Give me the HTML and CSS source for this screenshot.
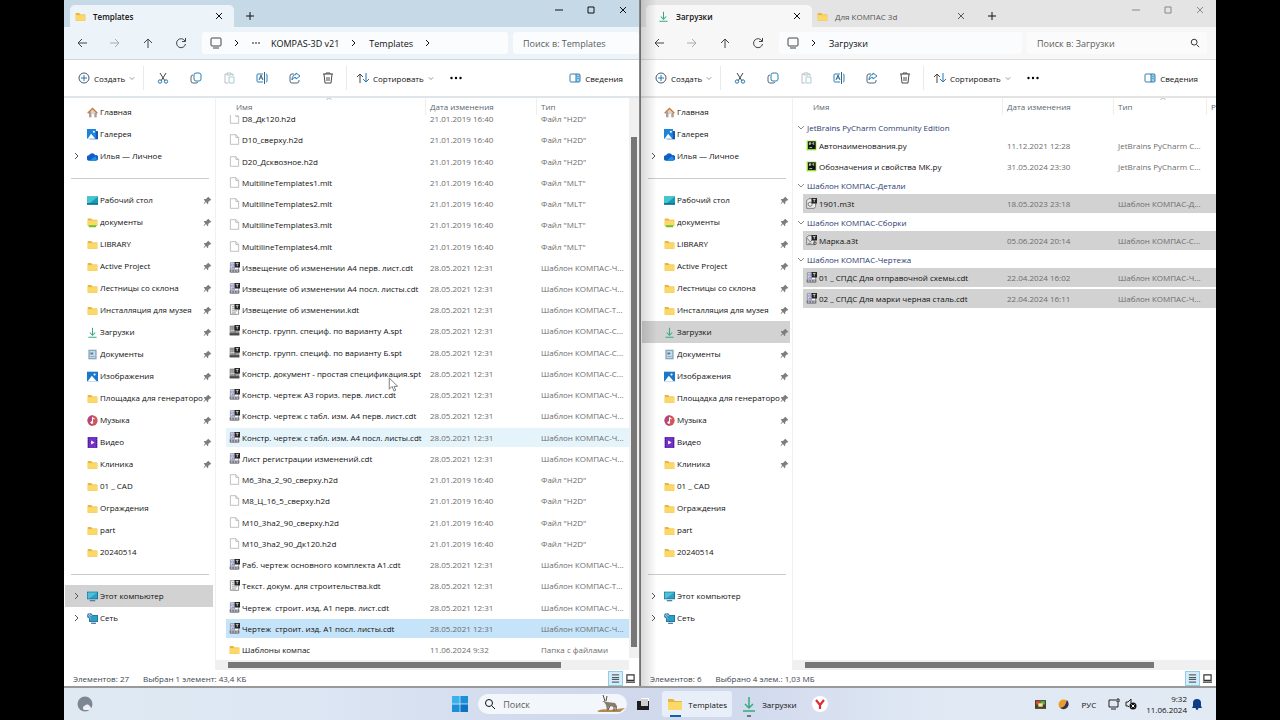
FILE: index.html
```
<!DOCTYPE html>
<html lang="ru">
<head>
    <meta charset="utf-8">
    <title>Проводник</title>
    <link rel="stylesheet" href="styles.css">
</head>
<body>
    <!-- Набор иконок -->
    <svg class="sprite" aria-hidden="true">
        <symbol id="folder" viewBox="0 0 16 16"><path d="M1 3h5l2 2h7v9H1z" fill="#e9b53c"/><path d="M1 6h14v8H1z" fill="#fcd867"/></symbol>
        <symbol id="folder-green" viewBox="0 0 16 16"><path d="M1 2h5l2 2h7v9H1z" fill="#e9b53c"/><path d="M1 5h14v8H1z" fill="#fcd867"/><path d="M2 12h12l-1 3H3z" fill="#6cc02c"/></symbol>
        <symbol id="home" viewBox="0 0 16 16"><path d="M3 7v8h4v-5h3v5h4V7L8 3z" fill="#d9d3cf"/><path d="M3 8v7h3V6zM11 9v6h3V8z" fill="#a99d98"/><path d="M1 9l7-7 7 7" fill="none" stroke="#cf7335" stroke-width="2"/></symbol>
        <symbol id="gallery" viewBox="0 0 16 16"><path d="M4 3h12v12H4z" fill="#1557a8"/><path d="M0 0h13v14H0z" fill="#1d83dc"/><path d="M1 14l5-7 6 7z" fill="#fff"/><circle cx="10" cy="4" r="1.5" fill="#fff"/></symbol>
        <symbol id="cloud" viewBox="0 0 16 16"><path d="M4 14a4 4 0 0 1-1-8 5 5 0 0 1 9 0 4 4 0 0 1 1 8z" fill="#0f5fc4"/><path d="M4 14l7-6a3.500 3.500 0 0 1 2 6z" fill="#2390e6"/></symbol>
        <symbol id="desktop" viewBox="0 0 16 16"><path d="M0 2h16v12H0z" fill="#159cb3"/><path d="M0 2h16L4 12H0z" fill="#43c6d0"/><path d="M0 12h16v2H0z" fill="#0b6793"/></symbol>
        <symbol id="download" viewBox="0 0 16 16"><path d="M8 1v10M4 8l4 4 4-4M2 15h12" fill="none" stroke="#35ac80" stroke-width="1.500"/></symbol>
        <symbol id="docs" viewBox="0 0 16 16"><path d="M2 1h12v14H2z" fill="#8ba5bd"/><path d="M4 3h8v10H4z" fill="#c8dceb"/><path d="M5 5h4v3H5zM5 10h6v1H5z" fill="#567c9b"/></symbol>
        <symbol id="image" viewBox="0 0 16 16"><path d="M0 1h16v14H0z" fill="#1b78c9"/><path d="M1 15l6-8 7 8z" fill="#fff"/><circle cx="11" cy="5" r="1.500" fill="#fff"/></symbol>
        <symbol id="music" viewBox="0 0 16 16"><circle cx="8" cy="8" r="7.500" fill="#d05658"/><path d="M3 13A7.500 7.500 0 0 1 8 .5v15a7 7 0 0 1-5-2.500z" fill="#b4487c"/><circle cx="7" cy="11" r="2" fill="#fff"/><path d="M8 11V4l3 2" fill="none" stroke="#fff" stroke-width="1.500"/></symbol>
        <symbol id="video" viewBox="0 0 16 16"><path d="M1 0h14v16H1z" fill="#7131c4"/><path d="M2 1v14M14 1v14" stroke="#401786" stroke-width="1.500" stroke-dasharray="2 1"/><path d="M6 5l5 3-5 3z" fill="#fff"/></symbol>
        <symbol id="pc" viewBox="0 0 16 16"><path d="M0 1h16v11H0z" fill="#176796"/><path d="M1 2h14v9H1z" fill="#2b9fc4"/><path d="M1 2h14L3 11H1z" fill="#4fc0d6"/><path d="M4 13h8v2H4z" fill="#5580a2"/></symbol>
        <symbol id="network" viewBox="0 0 16 16"><path d="M3 3h13v10H3z" fill="#176796"/><path d="M4 4h11v8H4z" fill="#2b9fc4"/><path d="M6 14h7v2H6z" fill="#5580a2"/><circle cx="4" cy="4" r="4" fill="#3d86b3"/><path d="M1 3l3 2 1 3M3 0l1 3 3 1" fill="none" stroke="#c6e8ee"/></symbol>
        <symbol id="pin" viewBox="0 0 12 12"><path d="M7 1l4 4-1 1-1 0-2 2 0 2-1 1-2-3-3 3 0-1 2-3-2-2 1-1 2 0 2-2z" fill="#7d7d7d"/></symbol>
        <symbol id="blank" viewBox="0 0 16 16"><path d="M2 1h8l4 4v10H2z" fill="#fff" stroke="#a5a5a5"/><path d="M10 1v4h4" fill="none" stroke="#a5a5a5"/></symbol>
        <symbol id="cdt" viewBox="0 0 16 16"><path d="M2 1h12v14H2z" fill="#f2f3fb" stroke="#73737e"/><path d="M4 3h3v3H4zM4 8h4v2H4z" fill="none" stroke="#6a71c1"/><path d="M1 11h14v4H1z" fill="#74747a"/><path d="M3 13h2M7 13h2M11 13h2" stroke="#eee" stroke-width="1.500"/><path d="M8 0h8v8H8z" fill="#222"/><path d="M10 2h4M12 2v4" stroke="#fff"/></symbol>
        <symbol id="kdt" viewBox="0 0 16 16"><path d="M2 1h12v14H2z" fill="#fff" stroke="#666"/><path d="M4 4h4M4 7h4M4 10h8M4 13h6" stroke="#666"/><path d="M8 0h8v8H8z" fill="#222"/><path d="M10 2h4M12 2v4" stroke="#fff"/></symbol>
        <symbol id="spt" viewBox="0 0 16 16"><path d="M1 1h14v14H1z" fill="#7c7c7c"/><path d="M3 2v9M6 2v9M2 8h7M10 10h4" stroke="#ddd"/><path d="M1 12h14v3H1z" fill="#4b4b4b"/><path d="M8 0h8v8H8z" fill="#222"/><path d="M10 2h4M12 2v4" stroke="#fff"/></symbol>
        <symbol id="m3t" viewBox="0 0 16 16"><path d="M1 4l3-3h10v11l-2 3H1z" fill="#eee" stroke="#555"/><circle cx="6" cy="9" r="3" fill="none" stroke="#444"/><path d="M8 0h8v8H8z" fill="#222"/><path d="M10 2h4M12 2v4" stroke="#fff"/></symbol>
        <symbol id="a3t" viewBox="0 0 16 16"><path d="M1 3l3-2h8v13H1z" fill="#e7e7e7" stroke="#555"/><path d="M2 5l4 5 3-3M3 12h5" fill="none" stroke="#444"/><circle cx="13" cy="12" r="2" fill="none" stroke="#333"/><path d="M8 0h8v8H8z" fill="#222"/><path d="M10 2h4M12 2v4" stroke="#fff"/></symbol>
        <symbol id="py" viewBox="0 0 16 16"><path d="M1 1h14v14H1z" fill="#8ddd2b"/><path d="M3 2h11v11H3z" fill="#111"/><path d="M5 7V4h2v2H5M12 4h-2v2h2M5 11h4" stroke="#fff" fill="none"/></symbol>
        <symbol id="chev-r" viewBox="0 0 8 8"><path d="M2 1l3 3-3 3" fill="none" stroke="currentColor"/></symbol>
        <symbol id="chev-d" viewBox="0 0 8 8"><path d="M1 3l3 3 3-3" fill="none" stroke="currentColor"/></symbol>
        <symbol id="chev-u" viewBox="0 0 8 8"><path d="M1 5l3-3 3 3" fill="none" stroke="currentColor"/></symbol>
        <symbol id="close" viewBox="0 0 8 8"><path d="M1 1l6 6M7 1L1 7" fill="none" stroke="currentColor"/></symbol>
        <symbol id="plus" viewBox="0 0 8 8"><path d="M4 0v8M0 4h8" fill="none" stroke="currentColor"/></symbol>
        <symbol id="minimize" viewBox="0 0 8 8"><path d="M0 4h8" stroke="currentColor"/></symbol>
        <symbol id="maximize" viewBox="0 0 8 8"><path d="M1 1h6v6H1z" fill="none" stroke="currentColor"/></symbol>
        <symbol id="left" viewBox="0 0 12 12"><path d="M11 6H2M6 2L2 6l4 4" fill="none" stroke="currentColor"/></symbol>
        <symbol id="right" viewBox="0 0 12 12"><path d="M1 6h9M6 2l4 4-4 4" fill="none" stroke="currentColor"/></symbol>
        <symbol id="up" viewBox="0 0 12 12"><path d="M6 11V2M2 6l4-4 4 4" fill="none" stroke="currentColor"/></symbol>
        <symbol id="refresh" viewBox="0 0 12 12"><path d="M10 4a4.500 4.500 0 1 0 .5 3M10.500 1v3.500H7" fill="none" stroke="currentColor"/></symbol>
        <symbol id="monitor" viewBox="0 0 12 12"><path d="M2 1h8a1 1 0 0 1 1 1v6a1 1 0 0 1-1 1H2a1 1 0 0 1-1-1V2a1 1 0 0 1 1-1zM3 11h6" fill="none" stroke="currentColor"/></symbol>
        <symbol id="create" viewBox="0 0 12 12"><circle cx="6" cy="6" r="5" fill="none" stroke="#46586a"/><path d="M6 3v6M3 6h6" stroke="#2078b5"/></symbol>
        <symbol id="cut" viewBox="0 0 12 12"><path d="M3 1l5 8M9 1L4 9" stroke="#444" fill="none"/><circle cx="3" cy="9.500" r="1.700" fill="none" stroke="#2078b5"/><circle cx="9" cy="9.500" r="1.700" fill="none" stroke="#2078b5"/></symbol>
        <symbol id="copy" viewBox="0 0 12 12"><rect x="4" y="1" width="7" height="8" rx="2" fill="none" stroke="#2c7fb8"/><path d="M3 3a2 2 0 0 0-2 2v4a2 2 0 0 0 2 2h3a2 2 0 0 0 2-1" fill="none" stroke="#536778"/></symbol>
        <symbol id="paste" viewBox="0 0 12 12"><path d="M4 2H2v9h3M8 2h2v2M4 1h4v2H4z" fill="none" stroke="#b8c0c4"/><path d="M6 5h5v6H6z" fill="none" stroke="#a8cdd6"/></symbol>
        <symbol id="rename" viewBox="0 0 12 12"><path d="M7 2H2a1 1 0 0 0-1 1v6a1 1 0 0 0 1 1h5M10 2a1 1 0 0 1 1 1v6a1 1 0 0 1-1 1" fill="none" stroke="#2c7fb8"/><path d="M8.500 0v12M3 8l2-5 2 5M4 6h2" fill="none" stroke="#37658a"/></symbol>
        <symbol id="share" viewBox="0 0 12 12"><path d="M5 2H3a2 2 0 0 0-2 2v5a2 2 0 0 0 2 2h5a2 2 0 0 0 2-2V8" fill="none" stroke="#536778"/><path d="M7 1l4 3-4 3V5.500Q4 5 3 8q0-5 4-5.500z" fill="none" stroke="#2c7fb8"/></symbol>
        <symbol id="trash" viewBox="0 0 12 12"><path d="M1 2h10M4 2V1h4v1M2 2l1 9h6l1-9M5 5v4M7 5v4" fill="none" stroke="#4a4a4a"/></symbol>
        <symbol id="sort" viewBox="0 0 12 12"><path d="M3 11V2M0 5l3-3 3 3" fill="none" stroke="#444"/><path d="M9 1v9M6 7l3 3 3-3" fill="none" stroke="#2078b5"/></symbol>
        <symbol id="dots" viewBox="0 0 12 12"><circle cx="1.500" cy="6" r="1.200"/><circle cx="6" cy="6" r="1.200"/><circle cx="10.500" cy="6" r="1.200"/></symbol>
        <symbol id="details" viewBox="0 0 12 12"><path d="M7 2h4v8H7z" fill="#9bd3f2"/><rect x="1" y="2" width="10" height="8" rx="1" fill="none" stroke="#3c7daa"/><path d="M7 2v8M9 4v1M9 6v1" stroke="#2078b5"/></symbol>
        <symbol id="search" viewBox="0 0 12 12"><circle cx="5" cy="5" r="3.500" fill="none" stroke="currentColor"/><path d="M8 8l3 3" stroke="currentColor"/></symbol>
        <symbol id="rows" viewBox="0 0 10 10"><path d="M1 1h8M1 4h8M1 6h8M1 9h8" stroke="#333"/></symbol>
        <symbol id="thumb" viewBox="0 0 10 10"><path d="M1 1h8v6H1zM0 9h10" fill="none" stroke="#333" stroke-width="1.300"/></symbol>
        <symbol id="weather" viewBox="0 0 16 16"><circle cx="8" cy="8" r="7.500" fill="#7c8794"/><path d="M7 14a2.500 2.500 0 0 1 1-4.500 3 3 0 0 1 5 1 2 2 0 0 1 0 3.500z" fill="#edf1f5"/></symbol>
        <symbol id="start" viewBox="0 0 16 16"><path d="M0 0h7.600v7.600H0z" fill="#38b2ea"/><path d="M8.400 0H16v7.600H8.400zM0 8.400h7.600V16H0z" fill="#1b90d8"/><path d="M8.400 8.400H16V16H8.400z" fill="#0974c4"/></symbol>
        <symbol id="taskview" viewBox="0 0 12 12"><path d="M4 0h8v8H4z" fill="#fff"/><path d="M0 3h12v9H0z" fill="#1e1e1e"/><path d="M4 1h7v7H4z" fill="#cfcfcf"/></symbol>
        <symbol id="yandex" viewBox="0 0 16 16"><circle cx="8" cy="8" r="8" fill="#fff"/><path d="M4 4l4 5v4M12 4L8 9" fill="none" stroke="#dd2f35" stroke-width="2.200"/></symbol>
        <symbol id="antelope" viewBox="0 0 28 18"><path d="M0 16q6-3 12-1l16-2-5 4H2z" fill="#b5884f"/><path d="M7 6l3 1 8 1 2 3v5h-1l-1-4-6-1-1 5h-1l-1-6-2-3-2-1z" fill="#8a7c6b"/><path d="M8 6L6 0M9 6l1-5M11 15l2-4M17 16v-5" fill="none" stroke="#534a42"/></symbol>
        <symbol id="tray-app" viewBox="0 0 10 10"><path d="M0 1h10v8H0z" fill="#4a432c"/><path d="M1 2h4v3H1z" fill="#d84b34"/><path d="M5 2h4v3H5z" fill="#58b34c"/><path d="M3 4h4v3H3z" fill="#f3e7a4"/></symbol>
        <symbol id="ball" viewBox="0 0 10 10"><circle cx="5" cy="5" r="4.500" fill="#eb9c2a"/><path d="M8 1a4.500 4.500 0 0 1-6 7q5 0 6-7z" fill="#27335e"/></symbol>
        <symbol id="net" viewBox="0 0 12 12"><path d="M8 2H1v7h9V5M3 11h5M9 1h2v3H9z" fill="none" stroke="#222"/></symbol>
        <symbol id="mute" viewBox="0 0 12 12"><path d="M1 4h2l3-3v4M1 4v4h2l1 1" fill="none" stroke="#222"/><circle cx="8" cy="8" r="3.500" fill="#111"/><path d="M6.500 6.500l3 3M9.500 6.500l-3 3" stroke="#fff"/></symbol>
        <symbol id="bell" viewBox="0 0 12 12"><path d="M6 1a4 4 0 0 1 4 4v3l1 2H1l1-2V5a4 4 0 0 1 4-4zM4.500 10h3l-1 2h-1z" fill="#0c3d86"/></symbol>
    </svg>

    <div class="screen">
        <div class="windows">
            <!-- Окно Templates -->
            <section class="window window-active">
                <header class="titlebar">
                    <div class="tab tab-current"><svg class="icon"><use href="#folder"/></svg><span>Templates</span><button aria-label="Закрыть вкладку"><svg class="small"><use href="#close"/></svg></button></div>
                    <button class="new-tab" aria-label="Новая вкладка"><svg class="small"><use href="#plus"/></svg></button>
                    <div class="controls">
                        <button aria-label="Свернуть"><svg class="small"><use href="#minimize"/></svg></button>
                        <button aria-label="Развернуть"><svg class="small"><use href="#maximize"/></svg></button>
                        <button aria-label="Закрыть"><svg class="small"><use href="#close"/></svg></button>
                    </div>
                </header>
                <div class="navbar">
                    <div class="nav-buttons">
                        <button aria-label="Назад"><svg class="tool"><use href="#left"/></svg></button>
                        <button aria-label="Вперед" disabled><svg class="tool"><use href="#right"/></svg></button>
                        <button aria-label="Вверх"><svg class="tool"><use href="#up"/></svg></button>
                        <button aria-label="Обновить"><svg class="tool"><use href="#refresh"/></svg></button>
                    </div>
                    <nav class="address">
                        <svg class="tool"><use href="#monitor"/></svg>
                        <svg class="small"><use href="#chev-r"/></svg>
                        <svg class="small"><use href="#dots"/></svg>
                        <a href="#">KOMPAS-3D v21</a>
                        <svg class="small"><use href="#chev-r"/></svg>
                        <a href="#">Templates</a>
                        <svg class="small"><use href="#chev-r"/></svg>
                    </nav>
                    <label class="search search-narrow"><input type="text" placeholder="Поиск в: Templates" aria-label="Поиск"></label>
                </div>
                <div class="toolbar">
                    <button class="create"><svg class="tool"><use href="#create"/></svg>Создать<svg class="tiny"><use href="#chev-d"/></svg></button>
                    <div class="actions">
                        <button aria-label="Вырезать"><svg class="tool"><use href="#cut"/></svg></button>
                        <button aria-label="Копировать"><svg class="tool"><use href="#copy"/></svg></button>
                        <button aria-label="Вставить"><svg class="tool"><use href="#paste"/></svg></button>
                        <button aria-label="Переименовать"><svg class="tool"><use href="#rename"/></svg></button>
                        <button aria-label="Поделиться"><svg class="tool"><use href="#share"/></svg></button>
                        <button aria-label="Удалить"><svg class="tool"><use href="#trash"/></svg></button>
                    </div>
                    <button class="sort"><svg class="tool"><use href="#sort"/></svg>Сортировать<svg class="tiny"><use href="#chev-d"/></svg></button>
                    <button class="more" aria-label="Еще"><svg class="tool"><use href="#dots"/></svg></button>
                    <button class="info"><svg class="tool"><use href="#details"/></svg>Сведения</button>
                </div>
                <div class="content">
                    <nav class="sidebar">
                        <a href="#"><svg class="icon"><use href="#home"/></svg><span>Главная</span></a>
                        <a href="#"><svg class="icon"><use href="#gallery"/></svg><span>Галерея</span></a>
                        <a href="#"><svg class="expand"><use href="#chev-r"/></svg><svg class="icon"><use href="#cloud"/></svg><span>Илья — Личное</span></a>
                        <hr>
                        <a href="#"><svg class="icon"><use href="#desktop"/></svg><span>Рабочий стол</span><svg class="pin"><use href="#pin"/></svg></a>
                        <a href="#"><svg class="icon"><use href="#folder-green"/></svg><span>документы</span><svg class="pin"><use href="#pin"/></svg></a>
                        <a href="#"><svg class="icon"><use href="#folder"/></svg><span>LIBRARY</span><svg class="pin"><use href="#pin"/></svg></a>
                        <a href="#"><svg class="icon"><use href="#folder"/></svg><span>Active Project</span><svg class="pin"><use href="#pin"/></svg></a>
                        <a href="#"><svg class="icon"><use href="#folder"/></svg><span>Лестницы со склона</span><svg class="pin"><use href="#pin"/></svg></a>
                        <a href="#"><svg class="icon"><use href="#folder"/></svg><span>Инсталляция для музея</span><svg class="pin"><use href="#pin"/></svg></a>
                        <a href="#"><svg class="icon"><use href="#download"/></svg><span>Загрузки</span><svg class="pin"><use href="#pin"/></svg></a>
                        <a href="#"><svg class="icon"><use href="#docs"/></svg><span>Документы</span><svg class="pin"><use href="#pin"/></svg></a>
                        <a href="#"><svg class="icon"><use href="#image"/></svg><span>Изображения</span><svg class="pin"><use href="#pin"/></svg></a>
                        <a href="#"><svg class="icon"><use href="#folder"/></svg><span>Площадка для генераторов</span><svg class="pin"><use href="#pin"/></svg></a>
                        <a href="#"><svg class="icon"><use href="#music"/></svg><span>Музыка</span><svg class="pin"><use href="#pin"/></svg></a>
                        <a href="#"><svg class="icon"><use href="#video"/></svg><span>Видео</span><svg class="pin"><use href="#pin"/></svg></a>
                        <a href="#"><svg class="icon"><use href="#folder"/></svg><span>Клиника</span><svg class="pin"><use href="#pin"/></svg></a>
                        <a href="#"><svg class="icon"><use href="#folder"/></svg><span>01 _ CAD</span></a>
                        <a href="#"><svg class="icon"><use href="#folder"/></svg><span>Ограждения</span></a>
                        <a href="#"><svg class="icon"><use href="#folder"/></svg><span>part</span></a>
                        <a href="#"><svg class="icon"><use href="#folder"/></svg><span>20240514</span></a>
                        <hr>
                        <a href="#" class="selected"><svg class="expand"><use href="#chev-r"/></svg><svg class="icon"><use href="#pc"/></svg><span>Этот компьютер</span></a>
                        <a href="#"><svg class="expand"><use href="#chev-r"/></svg><svg class="icon"><use href="#network"/></svg><span>Сеть</span></a>
                    </nav>
                    <div class="pane">
                        <table class="files files-fill">
                            <thead><tr><th>Имя<svg class="arrow"><use href="#chev-u"/></svg></th><th>Дата изменения</th><th>Тип</th></tr></thead>
                            <tbody>
                                <tr><td><svg class="icon"><use href="#blank"/></svg>D8_Дк120.h2d</td><td>21.01.2019 16:40</td><td>Файл "H2D"</td></tr>
                                <tr><td><svg class="icon"><use href="#blank"/></svg>D10_сверху.h2d</td><td>21.01.2019 16:40</td><td>Файл "H2D"</td></tr>
                                <tr><td><svg class="icon"><use href="#blank"/></svg>D20_Дсквозное.h2d</td><td>21.01.2019 16:40</td><td>Файл "H2D"</td></tr>
                                <tr><td><svg class="icon"><use href="#blank"/></svg>MultilineTemplates1.mlt</td><td>21.01.2019 16:40</td><td>Файл "MLT"</td></tr>
                                <tr><td><svg class="icon"><use href="#blank"/></svg>MultilineTemplates2.mlt</td><td>21.01.2019 16:40</td><td>Файл "MLT"</td></tr>
                                <tr><td><svg class="icon"><use href="#blank"/></svg>MultilineTemplates3.mlt</td><td>21.01.2019 16:40</td><td>Файл "MLT"</td></tr>
                                <tr><td><svg class="icon"><use href="#blank"/></svg>MultilineTemplates4.mlt</td><td>21.01.2019 16:40</td><td>Файл "MLT"</td></tr>
                                <tr><td><svg class="icon"><use href="#cdt"/></svg>Извещение об изменении А4 перв. лист.cdt</td><td>28.05.2021 12:31</td><td>Шаблон КОМПАС-Ч...</td></tr>
                                <tr><td><svg class="icon"><use href="#cdt"/></svg>Извещение об изменении А4 посл. листы.cdt</td><td>28.05.2021 12:31</td><td>Шаблон КОМПАС-Ч...</td></tr>
                                <tr><td><svg class="icon"><use href="#kdt"/></svg>Извещение об изменении.kdt</td><td>28.05.2021 12:31</td><td>Шаблон КОМПАС-Т...</td></tr>
                                <tr><td><svg class="icon"><use href="#spt"/></svg>Констр. групп. специф. по варианту А.spt</td><td>28.05.2021 12:31</td><td>Шаблон КОМПАС-С...</td></tr>
                                <tr><td><svg class="icon"><use href="#spt"/></svg>Констр. групп. специф. по варианту Б.spt</td><td>28.05.2021 12:31</td><td>Шаблон КОМПАС-С...</td></tr>
                                <tr><td><svg class="icon"><use href="#spt"/></svg>Констр. документ - простая спецификация.spt</td><td>28.05.2021 12:31</td><td>Шаблон КОМПАС-С...</td></tr>
                                <tr><td><svg class="icon"><use href="#cdt"/></svg>Констр. чертеж А3 гориз. перв. лист.cdt</td><td>28.05.2021 12:31</td><td>Шаблон КОМПАС-Ч...</td></tr>
                                <tr><td><svg class="icon"><use href="#cdt"/></svg>Констр. чертеж с табл. изм. А4 перв. лист.cdt</td><td>28.05.2021 12:31</td><td>Шаблон КОМПАС-Ч...</td></tr>
                                <tr class="hovered"><td><svg class="icon"><use href="#cdt"/></svg>Констр. чертеж с табл. изм. А4 посл. листы.cdt</td><td>28.05.2021 12:31</td><td>Шаблон КОМПАС-Ч...</td></tr>
                                <tr><td><svg class="icon"><use href="#cdt"/></svg>Лист регистрации изменений.cdt</td><td>28.05.2021 12:31</td><td>Шаблон КОМПАС-Ч...</td></tr>
                                <tr><td><svg class="icon"><use href="#blank"/></svg>М6_3ha_2_90_сверху.h2d</td><td>21.01.2019 16:40</td><td>Файл "H2D"</td></tr>
                                <tr><td><svg class="icon"><use href="#blank"/></svg>М8_Ц_16_5_сверху.h2d</td><td>21.01.2019 16:40</td><td>Файл "H2D"</td></tr>
                                <tr><td><svg class="icon"><use href="#blank"/></svg>М10_3ha2_90_сверху.h2d</td><td>21.01.2019 16:40</td><td>Файл "H2D"</td></tr>
                                <tr><td><svg class="icon"><use href="#blank"/></svg>М10_3ha2_90_Дк120.h2d</td><td>21.01.2019 16:40</td><td>Файл "H2D"</td></tr>
                                <tr><td><svg class="icon"><use href="#cdt"/></svg>Раб. чертеж основного комплекта А1.cdt</td><td>28.05.2021 12:31</td><td>Шаблон КОМПАС-Ч...</td></tr>
                                <tr><td><svg class="icon"><use href="#kdt"/></svg>Текст. докум. для строительства.kdt</td><td>28.05.2021 12:31</td><td>Шаблон КОМПАС-Т...</td></tr>
                                <tr><td><svg class="icon"><use href="#cdt"/></svg>Чертеж&nbsp; строит. изд. А1 перв. лист.cdt</td><td>28.05.2021 12:31</td><td>Шаблон КОМПАС-Ч...</td></tr>
                                <tr class="selected"><td><svg class="icon"><use href="#cdt"/></svg>Чертеж&nbsp; строит. изд. А1 посл. листы.cdt</td><td>28.05.2021 12:31</td><td>Шаблон КОМПАС-Ч...</td></tr>
                                <tr><td><svg class="icon"><use href="#folder"/></svg>Шаблоны компас</td><td>11.06.2024 9:32</td><td>Папка с файлами</td></tr>
                            </tbody>
                        </table>
                        <div class="hscroll"><div class="hthumb"></div></div>
                    </div>
                    <div class="vscroll"><div class="vthumb"></div></div>
                </div>
                <footer class="status">
                    <span>Элементов: 27</span><span>Выбран 1 элемент: 43,4 КБ</span>
                    <div class="views">
                        <button class="on" aria-label="Таблица"><svg class="view"><use href="#rows"/></svg></button>
                        <button aria-label="Эскизы"><svg class="view"><use href="#thumb"/></svg></button>
                    </div>
                </footer>
                <svg class="pointer" viewBox="0 0 10 16"><path d="M1 1v12l3-3 2 5 2-1-2-4h4z" fill="#fff" stroke="#777"/></svg>
            </section>

            <!-- Окно Загрузки -->
            <section class="window window-back">
                <header class="titlebar">
                    <div class="tab tab-current"><svg class="icon"><use href="#download"/></svg><span>Загрузки</span><button aria-label="Закрыть вкладку"><svg class="small"><use href="#close"/></svg></button></div>
                    <div class="tab"><svg class="icon"><use href="#folder"/></svg><span>Для КОМПАС 3d</span><button aria-label="Закрыть вкладку"><svg class="small"><use href="#close"/></svg></button></div>
                    <button class="new-tab" aria-label="Новая вкладка"><svg class="small"><use href="#plus"/></svg></button>
                    <div class="controls">
                        <button aria-label="Свернуть"><svg class="small"><use href="#minimize"/></svg></button>
                        <button aria-label="Развернуть"><svg class="small"><use href="#maximize"/></svg></button>
                        <button aria-label="Закрыть"><svg class="small"><use href="#close"/></svg></button>
                    </div>
                </header>
                <div class="navbar">
                    <div class="nav-buttons">
                        <button aria-label="Назад"><svg class="tool"><use href="#left"/></svg></button>
                        <button aria-label="Вперед" disabled><svg class="tool"><use href="#right"/></svg></button>
                        <button aria-label="Вверх"><svg class="tool"><use href="#up"/></svg></button>
                        <button aria-label="Обновить"><svg class="tool"><use href="#refresh"/></svg></button>
                    </div>
                    <nav class="address">
                        <svg class="tool"><use href="#monitor"/></svg>
                        <svg class="small"><use href="#chev-r"/></svg>
                        <a href="#">Загрузки</a>
                    </nav>
                    <label class="search"><input type="text" placeholder="Поиск в: Загрузки" aria-label="Поиск"><svg class="glass"><use href="#search"/></svg></label>
                </div>
                <div class="toolbar">
                    <button class="create"><svg class="tool"><use href="#create"/></svg>Создать<svg class="tiny"><use href="#chev-d"/></svg></button>
                    <div class="actions">
                        <button aria-label="Вырезать"><svg class="tool"><use href="#cut"/></svg></button>
                        <button aria-label="Копировать"><svg class="tool"><use href="#copy"/></svg></button>
                        <button aria-label="Вставить"><svg class="tool"><use href="#paste"/></svg></button>
                        <button aria-label="Переименовать"><svg class="tool"><use href="#rename"/></svg></button>
                        <button aria-label="Поделиться"><svg class="tool"><use href="#share"/></svg></button>
                        <button aria-label="Удалить"><svg class="tool"><use href="#trash"/></svg></button>
                    </div>
                    <button class="sort"><svg class="tool"><use href="#sort"/></svg>Сортировать<svg class="tiny"><use href="#chev-d"/></svg></button>
                    <button class="more" aria-label="Еще"><svg class="tool"><use href="#dots"/></svg></button>
                    <button class="info"><svg class="tool"><use href="#details"/></svg>Сведения</button>
                </div>
                <div class="content">
                    <nav class="sidebar">
                        <a href="#"><svg class="icon"><use href="#home"/></svg><span>Главная</span></a>
                        <a href="#"><svg class="icon"><use href="#gallery"/></svg><span>Галерея</span></a>
                        <a href="#"><svg class="expand"><use href="#chev-r"/></svg><svg class="icon"><use href="#cloud"/></svg><span>Илья — Личное</span></a>
                        <hr>
                        <a href="#"><svg class="icon"><use href="#desktop"/></svg><span>Рабочий стол</span><svg class="pin"><use href="#pin"/></svg></a>
                        <a href="#"><svg class="icon"><use href="#folder-green"/></svg><span>документы</span><svg class="pin"><use href="#pin"/></svg></a>
                        <a href="#"><svg class="icon"><use href="#folder"/></svg><span>LIBRARY</span><svg class="pin"><use href="#pin"/></svg></a>
                        <a href="#"><svg class="icon"><use href="#folder"/></svg><span>Active Project</span><svg class="pin"><use href="#pin"/></svg></a>
                        <a href="#"><svg class="icon"><use href="#folder"/></svg><span>Лестницы со склона</span><svg class="pin"><use href="#pin"/></svg></a>
                        <a href="#"><svg class="icon"><use href="#folder"/></svg><span>Инсталляция для музея</span><svg class="pin"><use href="#pin"/></svg></a>
                        <a href="#" class="selected"><svg class="icon"><use href="#download"/></svg><span>Загрузки</span><svg class="pin"><use href="#pin"/></svg></a>
                        <a href="#"><svg class="icon"><use href="#docs"/></svg><span>Документы</span><svg class="pin"><use href="#pin"/></svg></a>
                        <a href="#"><svg class="icon"><use href="#image"/></svg><span>Изображения</span><svg class="pin"><use href="#pin"/></svg></a>
                        <a href="#"><svg class="icon"><use href="#folder"/></svg><span>Площадка для генераторов</span><svg class="pin"><use href="#pin"/></svg></a>
                        <a href="#"><svg class="icon"><use href="#music"/></svg><span>Музыка</span><svg class="pin"><use href="#pin"/></svg></a>
                        <a href="#"><svg class="icon"><use href="#video"/></svg><span>Видео</span><svg class="pin"><use href="#pin"/></svg></a>
                        <a href="#"><svg class="icon"><use href="#folder"/></svg><span>Клиника</span><svg class="pin"><use href="#pin"/></svg></a>
                        <a href="#"><svg class="icon"><use href="#folder"/></svg><span>01 _ CAD</span></a>
                        <a href="#"><svg class="icon"><use href="#folder"/></svg><span>Ограждения</span></a>
                        <a href="#"><svg class="icon"><use href="#folder"/></svg><span>part</span></a>
                        <a href="#"><svg class="icon"><use href="#folder"/></svg><span>20240514</span></a>
                        <hr>
                        <a href="#"><svg class="expand"><use href="#chev-r"/></svg><svg class="icon"><use href="#pc"/></svg><span>Этот компьютер</span></a>
                        <a href="#"><svg class="expand"><use href="#chev-r"/></svg><svg class="icon"><use href="#network"/></svg><span>Сеть</span></a>
                    </nav>
                    <div class="pane">
                        <table class="files files-grouped">
                            <thead><tr><th>Имя</th><th>Дата изменения</th><th>Тип<svg class="arrow"><use href="#chev-u"/></svg></th><th>Р</th></tr></thead>
                            <tbody>
                                <tr class="group"><th><svg class="small"><use href="#chev-d"/></svg>JetBrains PyCharm Community Edition</th></tr>
                                <tr><td><svg class="icon"><use href="#py"/></svg>Автонаименования.py</td><td>11.12.2021 12:28</td><td>JetBrains PyCharm C...</td></tr>
                                <tr><td><svg class="icon"><use href="#py"/></svg>Обозначения и свойства МК.py</td><td>31.05.2024 23:30</td><td>JetBrains PyCharm C...</td></tr>
                                <tr class="group"><th><svg class="small"><use href="#chev-d"/></svg>Шаблон КОМПАС-Детали</th></tr>
                                <tr class="selected"><td><svg class="icon"><use href="#m3t"/></svg>1901.m3t</td><td>18.05.2023 23:18</td><td>Шаблон КОМПАС-Д...</td></tr>
                                <tr class="group"><th><svg class="small"><use href="#chev-d"/></svg>Шаблон КОМПАС-Сборки</th></tr>
                                <tr class="selected"><td><svg class="icon"><use href="#a3t"/></svg>Марка.a3t</td><td>05.06.2024 20:14</td><td>Шаблон КОМПАС-С...</td></tr>
                                <tr class="group"><th><svg class="small"><use href="#chev-d"/></svg>Шаблон КОМПАС-Чертежа</th></tr>
                                <tr class="selected"><td><svg class="icon"><use href="#cdt"/></svg>01 _ СПДС Для отправочной схемы.cdt</td><td>22.04.2024 16:02</td><td>Шаблон КОМПАС-Ч...</td></tr>
                                <tr class="selected"><td><svg class="icon"><use href="#cdt"/></svg>02 _ СПДС Для марки черная сталь.cdt</td><td>22.04.2024 16:11</td><td>Шаблон КОМПАС-Ч...</td></tr>
                            </tbody>
                        </table>
                        <div class="hscroll"><div class="hthumb"></div></div>
                    </div>
                </div>
                <footer class="status">
                    <span>Элементов: 6</span><span>Выбрано 4 элем.: 1,03 МБ</span>
                    <div class="views">
                        <button class="on" aria-label="Таблица"><svg class="view"><use href="#rows"/></svg></button>
                        <button aria-label="Эскизы"><svg class="view"><use href="#thumb"/></svg></button>
                    </div>
                </footer>
            </section>
        </div>

        <!-- Панель задач -->
        <footer class="taskbar">
            <button class="weather" aria-label="Погода"><svg class="app"><use href="#weather"/></svg></button>
            <div class="apps">
                <button aria-label="Пуск"><svg class="app"><use href="#start"/></svg></button>
                <label class="task-search"><svg class="tool"><use href="#search"/></svg><input type="text" placeholder="Поиск" aria-label="Поиск Windows"><svg class="animal"><use href="#antelope"/></svg></label>
                <button aria-label="Представление задач"><svg class="tool"><use href="#taskview"/></svg></button>
                <div class="tasks">
                    <button class="task task-on"><svg class="app"><use href="#folder"/></svg>Templates</button>
                    <button class="task"><svg class="app"><use href="#download"/></svg>Загрузки</button>
                </div>
                <button aria-label="Яндекс"><svg class="app"><use href="#yandex"/></svg></button>
            </div>
            <div class="tray">
                <svg class="icon"><use href="#tray-app"/></svg>
                <svg class="icon"><use href="#ball"/></svg>
                <span>РУС</span>
                <div class="tray-pair"><svg class="tool"><use href="#net"/></svg><svg class="tool"><use href="#mute"/></svg></div>
                <div class="tray-clock">
                    <div class="clock"><div>9:32</div><div>11.06.2024</div></div>
                    <svg class="tool"><use href="#bell"/></svg>
                </div>
            </div>
        </footer>
    </div>
</body>
</html>
```
FILE: styles.css
```
*{
    box-sizing: border-box;
    margin: 0;
    padding: 0;
}
body{
    background-color: #000;
    font-family: "Open Sans", "Noto Sans", sans-serif;
    font-size: 8px;
    color: #111;
}
button, input{
    font: inherit;
    color: inherit;
    background: none;
    border: none;
    outline: none;
}
button{
    display: flex;
    align-items: center;
    justify-content: center;
}
a{
    color: inherit;
    text-decoration: none;
}
svg{
    display: block;
    flex: none;
}
.sprite{
    position: absolute;
    width: 0;
    height: 0;
}

/* размеры иконок */
.icon{
    width: 11px;
    height: 11px;
}
.tool{
    width: 12px;
    height: 12px;
}
.small{
    width: 8px;
    height: 8px;
}
.tiny{
    width: 6px;
    height: 6px;
    color: #777;
}
.app{
    width: 16px;
    height: 16px;
}
.view{
    width: 9px;
    height: 9px;
}

/* экран */
.screen{
    display: flex;
    flex-direction: column;
    height: 100vh;
    margin: 0 5%;
    overflow: hidden;
}
.windows{
    flex: 1;
    min-height: 0;
    display: grid;
    grid-template-columns: 1fr 1fr;
    border-bottom: 2px solid #999;
}
.window{
    position: relative;
    display: flex;
    flex-direction: column;
    min-width: 0;
    min-height: 0;
    background-color: #fff;
    overflow: hidden;
}
.window-active{
    border-right: 1px solid #858585;
}
.window-back{
    border-left: 1px solid #6f6f6f;
}
/* тень от соседнего окна */
.window-back::before{
    content: "";
    position: absolute;
    top: 0;
    bottom: 0;
    left: 0;
    width: 16px;
    background: linear-gradient(to right, rgba(0,0,0,0.15), rgba(0,0,0,0));
    pointer-events: none;
    z-index: 2;
}

/* заголовок с вкладками */
.titlebar{
    display: flex;
    height: 27px;
    padding: 5px 8px 0 6px;
    background-color: #c5d9e6;
}
.window-back .titlebar{
    padding-left: 5px;
    background-color: #e4e4e4;
}
.tab{
    display: flex;
    align-items: center;
    gap: 7px;
    width: 164px;
    padding: 0 11px 0 5px;
    color: #555;
}
.tab button{
    margin-left: auto;
}
.tab-current{
    background-color: #edf4f9;
    border-radius: 5px 5px 0 0;
    font-weight: 600;
    color: #111;
}
.window-back .tab-current{
    width: 166px;
    padding-left: 12px;
    background-color: #f7f7f7;
}
.new-tab{
    width: 32px;
}
.controls{
    display: flex;
    margin-left: auto;
    height: 9px;
}
.controls button{
    width: 16px;
    margin-left: 16px;
}
.window-back .controls{
    color: #888;
}

/* строка адреса */
.navbar{
    display: flex;
    align-items: center;
    gap: 5px;
    height: 33px;
    padding: 0 0 0 2px;
    background-color: #edf4f9;
    border-bottom: 1px solid #ccd6dc;
}
.window-back .navbar{
    padding-right: 9px;
    background-color: #f7f7f7;
    border-bottom-color: #dcdcdc;
}
.nav-buttons{
    display: flex;
    width: 131px;
}
.nav-buttons button{
    width: 33px;
    height: 22px;
    color: #444;
}
.nav-buttons button:disabled{
    color: #aaa;
}
.address{
    flex: 1;
    display: flex;
    align-items: center;
    gap: 11px;
    height: 22px;
    padding-left: 8px;
    background-color: #fafcfe;
    border-radius: 3px;
    font-size: 9px;
    white-space: nowrap;
}
.address .tool{
    color: #444;
}
.search{
    display: flex;
    align-items: center;
    width: 180px;
    height: 22px;
    padding: 0 7px 0 10px;
    background-color: #fbfbfb;
    border-radius: 3px;
    font-size: 9px;
}
.search-narrow{
    width: 126px;
    background-color: #fafcfe;
}
.search input{
    flex: 1;
    min-width: 0;
}
.glass{
    width: 10px;
    height: 10px;
}
input::placeholder{
    color: #5c5c5c;
    opacity: 1;
}

/* панель команд */
.toolbar{
    display: flex;
    align-items: center;
    height: 38px;
    padding: 0 16px 0 14px;
    border-bottom: 2px solid #dfe5e8;
}
.window-back .toolbar{
    padding-right: 18px;
    border-bottom-color: #e3e3e3;
}
.toolbar button{
    gap: 4px;
    height: 24px;
}
.toolbar .create{
    width: 66px;
    justify-content: flex-start;
    border-right: 1px solid #e9e9e9;
}
.actions{
    display: flex;
    padding: 0 2px;
    border-right: 1px solid #e9e9e9;
}
.actions button{
    width: 33px;
}
.toolbar .sort{
    width: 92px;
    padding-left: 10px;
    justify-content: flex-start;
}
.toolbar .more{
    width: 34px;
}
.toolbar .info{
    margin-left: auto;
}

/* содержимое окна */
.content{
    flex: 1;
    display: flex;
    min-height: 0;
}
.sidebar{
    width: 152px;
    padding: 3px 2px 0 1px;
    border-right: 1px solid #f1f1f1;
}
.sidebar a{
    position: relative;
    display: flex;
    align-items: center;
    gap: 2px;
    height: 22px;
    padding: 0 1px 0 22px;
    line-height: 10px;
    white-space: nowrap;
}
.sidebar span{
    flex: 1;
    min-width: 0;
    overflow: hidden;
}
.sidebar .selected{
    background-color: #d2d2d2;
}
.sidebar hr{
    height: 1px;
    margin: 11px 4px 10px 6px;
    border: none;
    background-color: #ccc;
}
.expand{
    position: absolute;
    left: 8px;
    width: 8px;
    height: 8px;
    color: #555;
}
.pin{
    width: 9px;
    height: 9px;
    margin-left: -2px;
}
.pane{
    flex: 1;
    display: flex;
    flex-direction: column;
    min-width: 0;
}

/* таблица файлов */
.files{
    flex: 1;
    display: flex;
    flex-direction: column;
    min-height: 0;
    padding-left: 10px;
    white-space: nowrap;
    overflow: hidden;
}
.files thead{
    position: relative;
    background-color: #fff;
    z-index: 1;
}
.files tr{
    display: grid;
    grid-template-columns: 199px 111px 93px 1fr;
    align-items: center;
}
.files thead th{
    position: relative;
    height: 17px;
    padding-left: 4px;
    line-height: 18px;
    font-weight: normal;
    text-align: left;
    color: #5b6670;
    border-left: 1px solid #efefef;
}
.files thead th:first-child{
    padding-left: 10px;
    border-left: none;
}
.arrow{
    position: absolute;
    top: -2px;
    left: 50%;
    width: 6px;
    height: 6px;
    color: #888;
}
.files td{
    padding: 0 3px 0 5px;
    color: #6d6d6d;
    overflow: hidden;
    text-overflow: ellipsis;
}
.files td:first-child{
    display: flex;
    align-items: center;
    gap: 2px;
    padding: 0 0 0 3px;
    color: #111;
}
.files tbody tr{
    height: 21px;
    border: solid transparent;
    border-width: 1px 0;
    background-clip: padding-box;
}
.files-fill tbody{
    flex: 1;
    display: flex;
    flex-direction: column;
    min-height: 0;
    margin-top: -7px;
}
.files-fill tbody tr{
    flex: 1;
    min-height: 0;
}
.files-fill .hovered{
    background-color: #e5f3fb;
}
.files-fill .selected{
    background-color: #c5e4fa;
}
.files-grouped tbody{
    padding-top: 4px;
}
.files-grouped .selected{
    background-color: #d2d2d2;
}
.files-grouped tbody .group{
    display: block;
    height: 16px;
    margin-left: -6px;
}
.group th{
    display: flex;
    align-items: center;
    gap: 2px;
    height: 14px;
    font-weight: normal;
    color: #2b3a70;
}
.group .small{
    color: #888;
}

/* полосы прокрутки */
.hscroll{
    height: 10px;
    padding: 2px 0 2px 12px;
    background-color: #f0f0f0;
}
.hthumb{
    width: 83%;
    height: 6px;
    background-color: #777;
}
.window-back .hthumb{
    width: 85%;
}
.vscroll{
    width: 10px;
    margin-bottom: 12px;
    padding: 39px 2px 11px;
    background-color: #f0f0f0;
}
.vthumb{
    height: 100%;
    background-color: #777;
}

/* строка состояния */
.status{
    display: flex;
    align-items: center;
    gap: 14px;
    height: 16px;
    padding: 0 1px 0 9px;
    color: #3c4650;
}
.views{
    display: flex;
    margin-left: auto;
}
.views button{
    width: 15px;
    height: 15px;
}
.views .on{
    background-color: #d3eefa;
    border: 1px solid #92cde6;
}

/* указатель мыши поверх списка */
.pointer{
    position: absolute;
    left: 324px;
    top: 377px;
    width: 10px;
    height: 15px;
}

/* панель задач */
.taskbar{
    display: grid;
    grid-template-columns: 1fr auto 1fr;
    align-items: center;
    height: 32px;
    padding: 0 13px;
    background: linear-gradient(to right, #dfe9f2, #dde7f4 20%, #d0d8ec 45%, #d2daee 60%, #dfe8f3 75%, #e2ebf4);
}
.weather{
    justify-self: start;
}
.apps{
    display: flex;
    align-items: center;
    gap: 10px;
}
.task-search{
    display: flex;
    align-items: center;
    gap: 7px;
    width: 149px;
    height: 20px;
    padding: 0 2px 0 6px;
    background-color: #f3f7fc;
    border-radius: 10px;
    font-size: 9px;
}
.task-search input{
    flex: 1;
    min-width: 0;
}
.animal{
    width: 28px;
    height: 18px;
}
.tasks{
    display: flex;
    gap: 4px;
    padding-left: 3px;
}
.task{
    position: relative;
    gap: 5px;
    height: 26px;
    padding: 0 5px;
    border-radius: 3px;
}
.task-on{
    background-color: #e9eff9;
}
.task::after{
    content: "";
    position: absolute;
    left: 11px;
    bottom: 0;
    width: 4px;
    height: 2px;
    background-color: #777;
}
.task-on::after{
    left: 8px;
    width: 11px;
    background-color: #1560ad;
}
.tray{
    justify-self: end;
    display: flex;
    align-items: center;
    gap: 12px;
}
.tray-pair{
    display: flex;
    gap: 5px;
    margin-right: -3px;
}
.tray-clock{
    display: flex;
    align-items: center;
    gap: 4px;
}
.clock{
    line-height: 11px;
    text-align: right;
}
```
